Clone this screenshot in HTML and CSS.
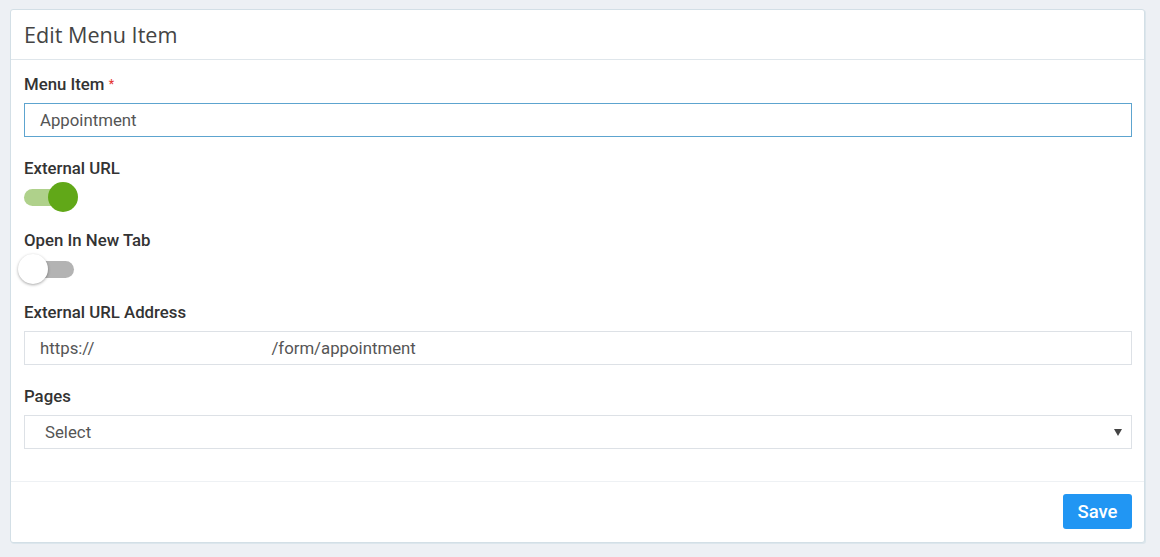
FILE: index.html
```html
<!DOCTYPE html>
<html>
<head>
<meta charset="utf-8">
<link rel="stylesheet" href="styles.css">
</head>
<body>
<div class="card">
  <div class="card-header"><h1 class="title">Edit Menu Item</h1></div>
  <div class="card-body">
    <div class="field">
      <label class="label">Menu Item <span class="req">*</span></label>
      <div class="input focused">Appointment</div>
    </div>
    <div class="field toggle-field f2">
      <label class="label">External URL</label>
      <div class="switch on"><span class="track"></span><span class="knob"></span></div>
    </div>
    <div class="field toggle-field f3">
      <label class="label">Open In New Tab</label>
      <div class="switch off"><span class="track"></span><span class="knob"></span></div>
    </div>
    <div class="field f4">
      <label class="label">External URL Address</label>
      <div class="input"><span>https://</span><span class="gap"></span><span>/form/appointment</span></div>
    </div>
    <div class="field f5">
      <label class="label">Pages</label>
      <div class="input select"><span>Select</span><svg class="caret" width="8" height="7" viewBox="0 0 8 7"><path d="M0 0H8L4 7Z" fill="#444"/></svg></div>
    </div>
  </div>
  <div class="card-footer"><button class="btn">Save</button></div>
</div>
</body>
</html>
```
FILE: styles.css
```css
* { box-sizing: border-box; }
html, body { margin: 0; padding: 0; }
body {
  background: #edf0f4;
  padding: 9px 15px 14px 10px;
  font-family: Roboto, "Noto Sans", sans-serif;
}
.card {
  background: #fff;
  border: 1px solid #d3dfe6;
  border-radius: 3px;
  box-shadow: 1px 1px 0 #dce6ec;
}
.card-header {
  height: 50px;
  border-bottom: 1px solid #dfe6eb;
  padding: 0 13px;
  display: flex;
  align-items: center;
}
.title {
  margin: 0;
  font-family: "Open Sans", sans-serif;
  font-weight: 400;
  font-size: 21.6px;
  color: #444;
}
.card-body {
  padding: 15px 12px 32px 13px;
}
.field { display: flex; flex-direction: column; }
.f2 { margin-top: 22px; }
.f3 { margin-top: 19px; }
.f4 { margin-top: 19px; }
.f5 { margin-top: 22px; }
.label {
  font-size: 16.8px;
  font-weight: 500;
  color: #333;
  line-height: 18px;
  margin-bottom: 10px;
  white-space: nowrap;
}
.toggle-field .label { margin-bottom: 5px; }
.req { color: #e53935; font-size: 12px; vertical-align: top; }
.input {
  height: 34px;
  border: 1px solid #dde1e6;
  display: flex;
  align-items: center;
  padding: 0 15px;
  font-size: 16.8px;
  color: #555;
  white-space: nowrap;
}
.input.focused { border-color: #5da4cf; }
.gap { width: 177px; }
.select { padding: 0 9px 0 20px; justify-content: space-between; }
.caret { display: block; }
.switch {
  position: relative;
  width: 50px;
  height: 30px;
}
.track {
  position: absolute;
  left: 0; top: 7px;
  width: 50px; height: 17px;
  border-radius: 9px;
}
.knob {
  position: absolute;
  top: 0;
  width: 30px; height: 30px;
  border-radius: 50%;
}
.switch.on .track { background: #afd18b; }
.switch.on .knob { left: 24px; background: #61a818; }
.switch.off .track { background: #b3b3b3; }
.switch.off .knob { left: -6px; background: #fff; box-shadow: 0 1px 3px rgba(0,0,0,0.35); }
.card-footer {
  border-top: 1px solid #eef1f4;
  padding: 12px 12px 13px 0;
  display: flex;
  justify-content: flex-end;
}
.btn {
  background: #2196f3;
  color: #fff;
  border: 0;
  border-radius: 3px;
  width: 69px;
  height: 35px;
  font-family: Roboto, sans-serif;
  font-weight: 500;
  font-size: 18.5px;
}
```
